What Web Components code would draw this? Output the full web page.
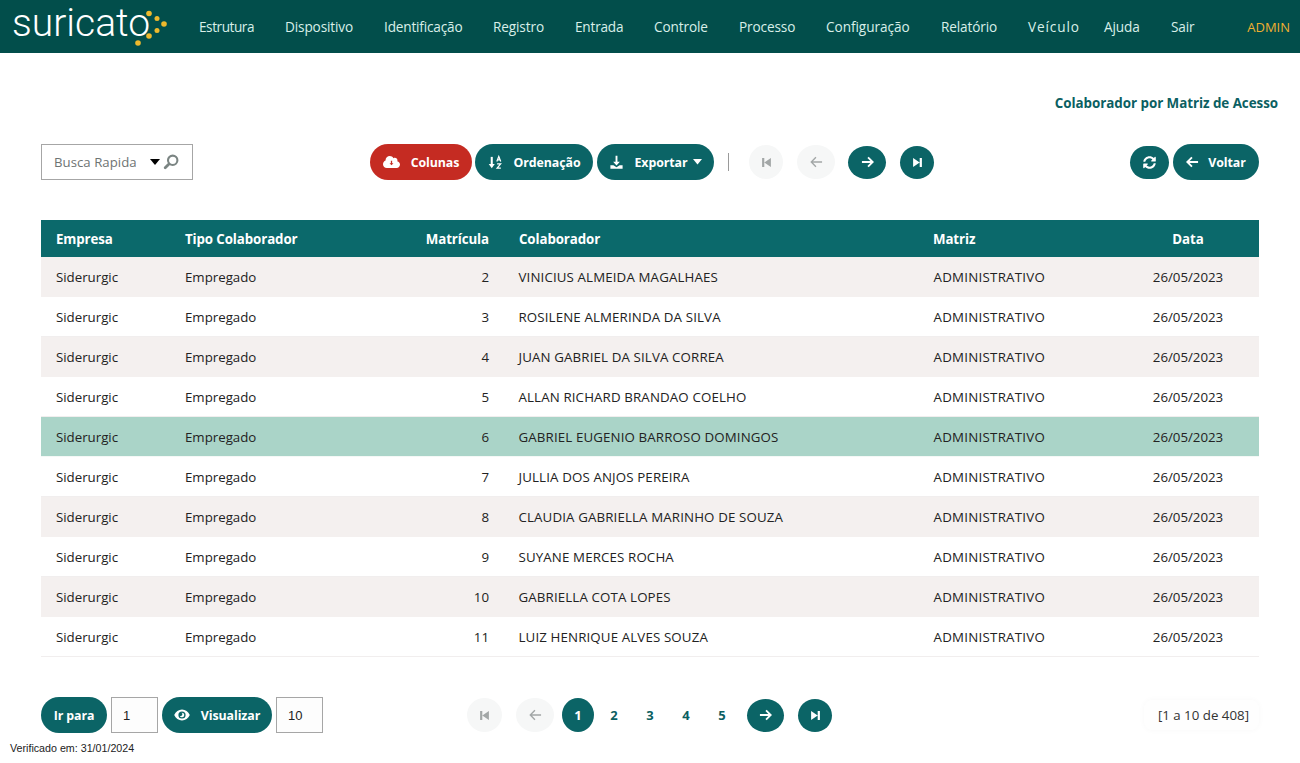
<!DOCTYPE html>
<html lang="pt"><head><meta charset="utf-8"><title>Suricato</title>
<style>
html,body{margin:0;padding:0;background:#fff;}
body{font-family:"Open Sans","Noto Sans",sans-serif;font-size:13.2px;color:#222;width:1300px;height:763px;overflow:hidden;}
</style></head><body>
<su-app></su-app>
<script>
const ICONS={
cloud:'<svg viewBox="0 0 640 512" width="17" height="14"><path fill="currentColor" d="M537.6 226.6c4.1-10.7 6.4-22.4 6.4-34.6 0-53-43-96-96-96-19.7 0-38.1 6-53.3 16.2C367 64.2 315.3 32 256 32c-88.4 0-160 71.6-160 160 0 2.7.1 5.4.2 8.1C40.2 219.8 0 273.2 0 336c0 79.5 64.5 144 144 144h368c70.7 0 128-57.3 128-128 0-61.9-44-113.6-102.4-125.4z"/><path fill="#c52b22" d="M296 210h48v90h50l-74 76-74-76h50z"/></svg>',
sort:'<svg viewBox="0 0 16 16" width="15" height="15"><path fill="none" stroke="currentColor" stroke-width="2.200" d="M4 2v10"/><path fill="currentColor" d="M.8 9.600h6.400L4 14.200z"/><path fill="none" stroke="currentColor" stroke-width="1.300" d="M9.400 7l2.100-5.400L13.600 7M10.100 5.300h2.800M9.700 9.500h3.800l-3.800 4.500h4"/></svg>',
down:'<svg viewBox="0 0 16 16" width="15" height="15"><path fill="currentColor" d="M7 .8h2v6.400h2.600L8 11.200 4.400 7.200H7zM1.500 10.800h3.200L8 13l3.300-2.200h3.200v3.900h-13z"/></svg>',
caret:'<svg viewBox="0 0 10 6" width="9" height="5.500"><path fill="currentColor" d="M0 0h10L5 6z"/></svg>',
caretb:'<svg viewBox="0 0 10 6" width="10" height="6"><path fill="currentColor" d="M0 0h10L5 6z"/></svg>',
first:'<svg viewBox="0 0 12 12" width="11" height="11"><path fill="currentColor" d="M1.200 1h2.400v10H1.200zM3.600 6 10.800 1v10z"/></svg>',
last:'<svg viewBox="0 0 12 12" width="11" height="11"><path fill="currentColor" d="M10.800 1H8.400v10h2.400zM8.400 6 1.200 1v10z"/></svg>',
left:'<svg viewBox="0 0 14 12" width="13" height="12"><path fill="none" stroke="currentColor" stroke-width="1.500" d="M13 6H1.600M6.400 1 1.400 6l5 5"/></svg>',
right:'<svg viewBox="0 0 14 12" width="13" height="12"><path fill="none" stroke="currentColor" stroke-width="2" d="M1 6h11.400M7.600 1l5 5-5 5"/></svg>',
leftw:'<svg viewBox="0 0 14 12" width="13" height="12"><path fill="none" stroke="currentColor" stroke-width="2" d="M13 6H1.600M6.400 1 1.400 6l5 5"/></svg>',
sync:'<svg viewBox="0 0 512 512" width="13" height="13"><path fill="currentColor" d="M370.72 133.28C339.458 104.008 298.888 87.962 255.848 88c-77.458.068-144.328 53.178-162.791 126.85-1.344 5.363-6.122 9.15-11.651 9.15H24.103c-7.498 0-13.194-6.807-11.807-14.176C33.933 94.924 134.813 8 256 8c66.448 0 126.791 26.136 171.315 68.685L463.03 40.97C478.149 25.851 504 36.559 504 57.941V192c0 13.255-10.745 24-24 24H345.941c-21.382 0-32.09-25.851-16.971-40.971l41.75-41.749zM32 296h134.059c21.382 0 32.09 25.851 16.971 40.971l-41.75 41.75c31.262 29.273 71.835 45.319 114.876 45.28 77.418-.07 144.315-53.144 162.787-126.849 1.344-5.363 6.122-9.15 11.651-9.15h57.304c7.498 0 13.194 6.807 11.807 14.176C478.067 417.076 377.187 504 256 504c-66.448 0-126.791-26.136-171.315-68.685L48.97 471.03C33.851 486.149 8 475.441 8 454.059V320c0-13.255 10.745-24 24-24z"/></svg>',
eye:'<svg viewBox="0 0 16 12" width="16" height="12"><path fill="currentColor" fill-rule="evenodd" d="M8 .6C4.600.6 1.700 2.800.2 6c1.500 3.200 4.400 5.400 7.800 5.400s6.300-2.200 7.800-5.400C14.300 2.800 11.400.6 8 .6zM8 2.400a3.600 3.600 0 1 1 0 7.200 3.600 3.600 0 0 1 0-7.200z"/><path fill="currentColor" d="M8 3.700a2.300 2.300 0 1 1-2.200 3 1.500 1.500 0 0 0 1.700-3 2.300 2.300 0 0 1 .5 0z"/></svg>',
search:'<svg viewBox="0 0 16 16" width="16" height="16"><circle cx="9.700" cy="6.300" r="4.700" fill="none" stroke="#7b8583" stroke-width="2.100"/><path stroke="#7b8583" stroke-width="2.800" stroke-linecap="round" d="M6 10 2.200 13.800"/></svg>'
};

class SuLogo extends HTMLElement{
 constructor(){super();this.attachShadow({mode:'open'}).innerHTML=`<style>
 :host{display:block;position:relative;width:168px;height:53px;flex:none}
 span{position:absolute;left:12px;top:0;font:300 39px/46px Roboto,sans-serif;color:#fff;white-space:nowrap}
 svg{position:absolute;left:0;top:0}
 </style><span>suricato</span><svg width="168" height="53" aria-hidden="true"><g fill="#efb92c">
 <circle cx="149" cy="13.500" r="2.800"/><circle cx="157" cy="18.500" r="2.500"/><circle cx="164" cy="24" r="2.800"/><circle cx="157" cy="30.500" r="2.500"/><circle cx="149" cy="36" r="2.800"/><circle cx="138" cy="43" r="2.800"/></g></svg>`;}
}
class SuNav extends HTMLElement{
 constructor(){super();const items=[['Estrutura',86,-.45],['Dispositivo',99,-.12],['Identificação',109,-.17],['Registro',82,-.12],['Entrada',79,-.2],['Controle',85,-.12],['Processo',87,-.12],['Configuração',115,-.05],['Relatório',87,-.12],['Veículo',76,.9],['Ajuda',67,-.12],['Sair',40,-.12]];
 this.attachShadow({mode:'open'}).innerHTML=`<style>
 :host{display:flex;align-items:center;height:53px;background:#024e4b;color:#d9efe9;font-size:13.600px}
 nav{display:flex;align-items:center;margin-left:31px;flex:1}
 a{white-space:nowrap;flex:none}
 .admin{margin-left:auto;margin-right:10px;color:#f0b030;letter-spacing:0;font-size:13px}
 </style><su-logo></su-logo><nav>${items.map(([t,w,s])=>`<a style="width:${w}px;letter-spacing:${s}px">${t}</a>`).join('')}<a class="admin">ADMIN</a></nav>`;}
}
class SuBtn extends HTMLElement{
 connectedCallback(){ if(this.shadowRoot)return;
 const ic=this.getAttribute('icon'),after=this.getAttribute('after');
 this.attachShadow({mode:'open'}).innerHTML=`<style>
 :host{display:inline-flex;align-items:center;justify-content:center;box-sizing:border-box;height:36px;border-radius:18px;background:#0b6466;color:#fff;font-weight:700;font-size:12.400px;letter-spacing:-.1px;white-space:nowrap;flex:none}
 :host([red]){background:#c52b22}
 :host([off]){background:#f6f7f7;color:#a3a7a7}
 :host([round]){border-radius:50%}
 .i{display:inline-flex}
 .t{margin-left:var(--g,11px)}
 .a{display:inline-flex;margin-left:6px}
 </style>${ic?`<span class="i">${ICONS[ic]}</span>`:''}${this.textContent.trim()?`<span class="t" style="${ic?'':'margin-left:0'}"><slot></slot></span>`:''}${after?`<span class="a">${ICONS[after]}</span>`:''}`;}
}
class SuSearch extends HTMLElement{
 constructor(){super();this.attachShadow({mode:'open'}).innerHTML=`<style>
 :host{display:flex;align-items:center;box-sizing:border-box;width:152px;height:36px;border:1px solid #a6a6a6;background:#fff;color:#6e7473;font-size:13.200px;padding-left:12px;letter-spacing:.03px;flex:none}
 .c{display:inline-flex;margin-left:13px;color:#000}
 .s{display:inline-flex;margin-left:3px}
 </style><span>Busca Rapida</span><span class="c">${ICONS.caretb}</span><span class="s">${ICONS.search}</span>`;}
}
class SuToolbar extends HTMLElement{
 constructor(){super();this.attachShadow({mode:'open'}).innerHTML=`<style>
 :host{display:flex;align-items:center;height:36px;margin:0 41px}
 .c{display:flex;align-items:center;margin-left:177px}
 .sep{width:1px;height:18px;background:#9a9a9a;margin:0 20px 0 14px}
 .r{display:flex;align-items:center;margin-left:auto;gap:4px}
 </style><su-search></su-search><div class="c">
 <su-btn red icon="cloud" style="width:102px">Colunas</su-btn>
 <su-btn icon="sort" style="width:118px;margin-left:3px">Ordenação</su-btn>
 <su-btn icon="down" after="caret" style="width:117px;margin-left:4px">Exportar</su-btn>
 <div class="sep"></div>
 <su-btn off round icon="first" style="width:34px;height:34px"></su-btn>
 <su-btn off round icon="left" style="width:38px;height:34px;margin-left:14px"></su-btn>
 <su-btn round icon="right" style="width:38px;height:33px;margin-left:13px"></su-btn>
 <su-btn round icon="last" style="width:34px;height:33px;margin-left:14px"></su-btn>
 </div><div class="r">
 <su-btn round icon="sync" style="width:39px;height:33px;border-radius:17px"></su-btn>
 <su-btn icon="leftw" style="width:86px;--g:9px">Voltar</su-btn></div>`;}
}
class SuTable extends HTMLElement{
 constructor(){super();const names=['VINICIUS ALMEIDA MAGALHAES','ROSILENE ALMERINDA DA SILVA','JUAN GABRIEL DA SILVA CORREA','ALLAN RICHARD BRANDAO COELHO','GABRIEL EUGENIO BARROSO DOMINGOS','JULLIA DOS ANJOS PEREIRA','CLAUDIA GABRIELLA MARINHO DE SOUZA','SUYANE MERCES ROCHA','GABRIELLA COTA LOPES','LUIZ HENRIQUE ALVES SOUZA'];
 const rows=names.map((n,i)=>`<div class="row ${i==4?'sel':i%2==0?'odd':''}"><span>Siderurgic</span><span>Empregado</span><span class="num">${i+2}</span><span class="nm">${n}</span><span class="up">ADMINISTRATIVO</span><span class="ctr">26/05/2023</span></div>`).join('');
 this.attachShadow({mode:'open'}).innerHTML=`<style>
 :host{display:block;margin:40px 41px 0;font-size:13.300px;color:#222}
 .row,.head{display:grid;grid-template-columns:129px 200px 134px 414px 199px 142px;align-items:center}
 .row span,.head span{padding:0 15px;white-space:nowrap;box-sizing:border-box}
 .head{height:37px;background:#0b696b;color:#fff;font-weight:700;font-size:13.300px;letter-spacing:-.1px}
 .row{height:40px;box-sizing:border-box;border-bottom:1px solid #f1eeee;letter-spacing:-.02px}
 .row span.up{letter-spacing:.26px;padding-left:15.500px}
 .row span.nm{letter-spacing:.13px;padding-left:14.500px}
 .odd{background:#f4f0ef;border-bottom-color:#f4f0ef}.sel{background:#aad4c8;border-bottom-color:#f4f8f6}
 .num{text-align:right}.ctr{text-align:center}
 </style><div class="head"><span>Empresa</span><span>Tipo Colaborador</span><span class="num">Matrícula</span><span>Colaborador</span><span>Matriz</span><span class="ctr">Data</span></div>${rows}`;}
}
class SuField extends HTMLElement{
 connectedCallback(){if(this.shadowRoot)return;this.attachShadow({mode:'open'}).innerHTML=`<style>
 :host{display:flex;align-items:center;box-sizing:border-box;width:47px;height:36px;border:1px solid #a6a6a6;background:#fdfdfd;color:#222;font:13px "Liberation Sans",sans-serif;padding-left:11px;flex:none}
 </style><slot></slot>`;}
}
class SuPager extends HTMLElement{
 constructor(){super();this.attachShadow({mode:'open'}).innerHTML=`<style>
 :host{display:flex;align-items:center;height:36px;margin:40px 41px 0 41px;position:relative}
 .n{display:flex;align-items:center;margin-left:144px}
 .p{width:36px;text-align:center;color:#0b5f62;font-weight:700;font-size:13px}
 .info{margin-left:auto;padding:0 10px 0 14px;height:30px;line-height:30px;background:#fefefe;box-shadow:0 0 6px rgba(0,0,0,.03);font-size:13.300px;color:#333;border-radius:8px;white-space:nowrap}
 </style>
 <su-btn style="width:66px">Ir para</su-btn><su-field style="margin-left:4px">1</su-field>
 <su-btn icon="eye" style="width:110px;margin-left:4px">Visualizar</su-btn><su-field style="margin-left:4px">10</su-field>
 <div class="n">
 <su-btn off round icon="first" style="width:35px;height:34px"></su-btn>
 <su-btn off round icon="left" style="width:38px;height:34px;margin-left:14px"></su-btn>
 <su-btn round style="width:32px;height:34px;margin-left:8px;font-size:13px">1</su-btn>
 <span class="p" style="margin-left:2px">2</span><span class="p">3</span><span class="p">4</span><span class="p">5</span>
 <su-btn round icon="right" style="width:37px;height:33px;margin-left:7px"></su-btn>
 <su-btn round icon="last" style="width:34px;height:33px;margin-left:14px"></su-btn>
 </div><div class="info">[1 a 10 de 408]</div>`;}
}
class SuApp extends HTMLElement{
 constructor(){super();this.attachShadow({mode:'open'}).innerHTML=`<style>
 :host{display:block;width:1300px}
 .title{margin:41px 22px 0 0;text-align:right;color:#0b5f62;font-weight:700;font-size:13.400px;line-height:18px;letter-spacing:-.05px}
 su-toolbar{margin-top:32px}
 .ver{margin:8px 0 0 10px;font:10.700px/14px "Liberation Sans",sans-serif;color:#222}
 </style><su-nav></su-nav><div class="title">Colaborador por Matriz de Acesso</div><su-toolbar></su-toolbar><su-table></su-table><su-pager></su-pager><div class="ver">Verificado em: 31/01/2024</div>`;}
}
customElements.define('su-logo',SuLogo);
customElements.define('su-btn',SuBtn);
customElements.define('su-search',SuSearch);
customElements.define('su-field',SuField);
customElements.define('su-nav',SuNav);
customElements.define('su-toolbar',SuToolbar);
customElements.define('su-table',SuTable);
customElements.define('su-pager',SuPager);
customElements.define('su-app',SuApp);
</script></body></html>
